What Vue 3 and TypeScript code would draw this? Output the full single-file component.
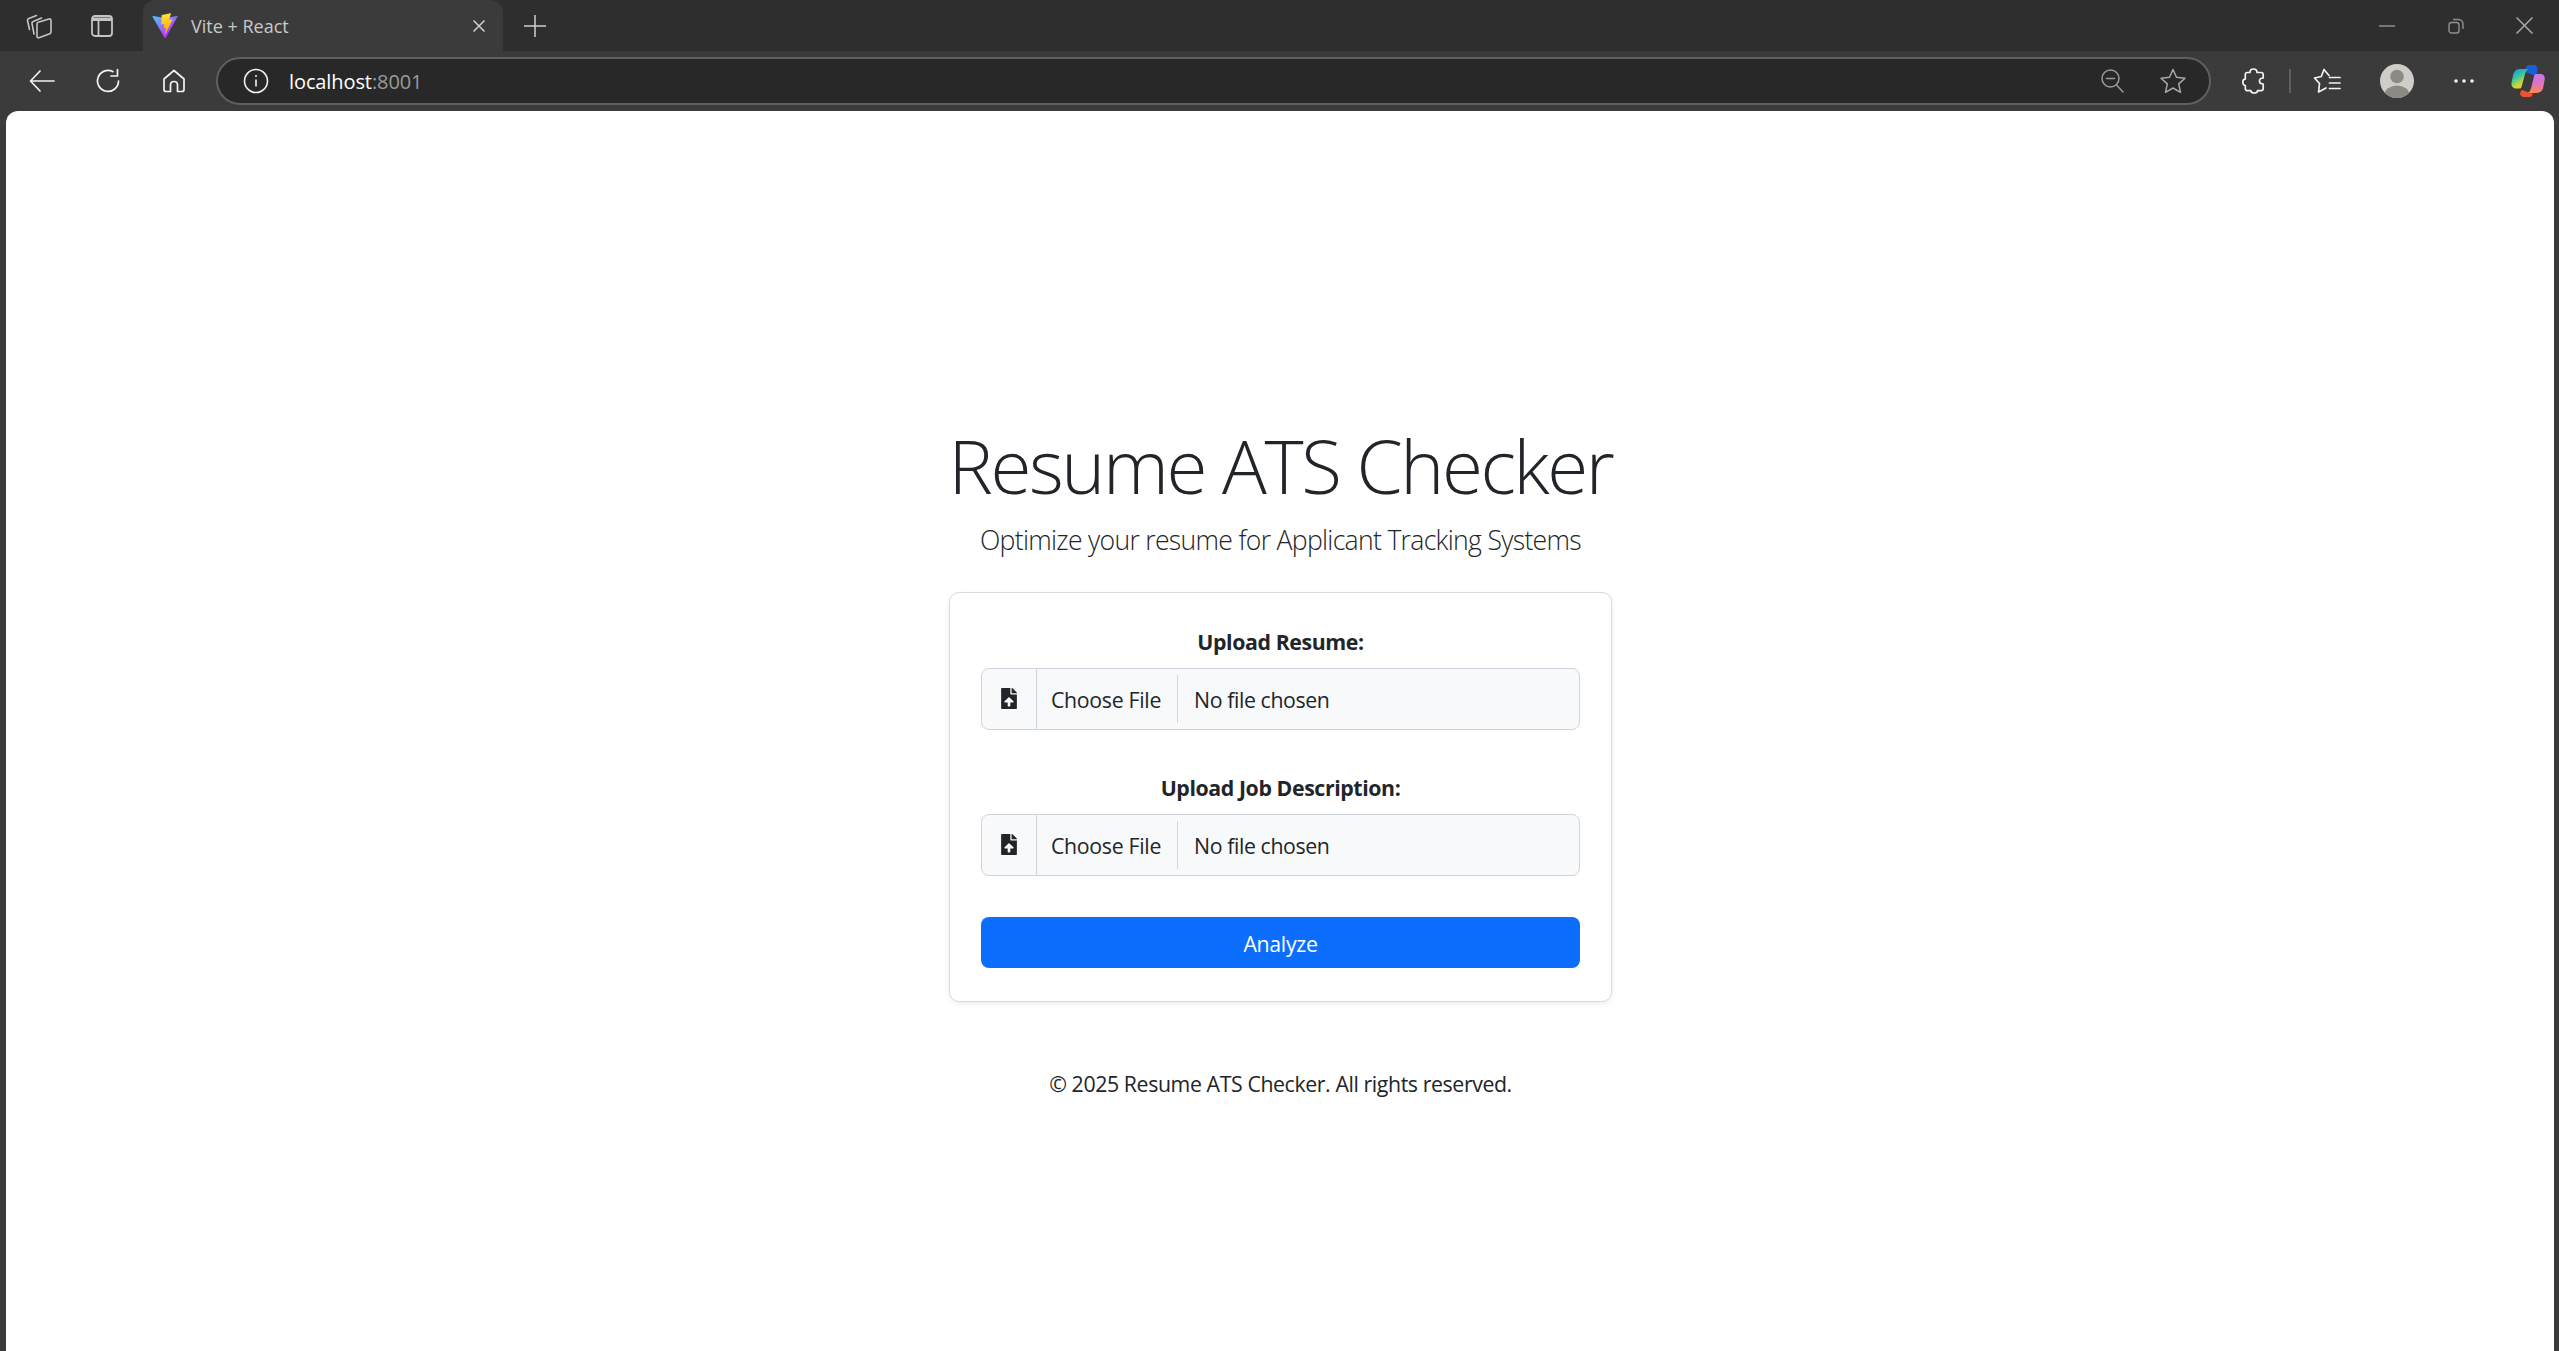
<script setup lang="ts">
const uploads = [
  { id: "resume", label: "Upload Resume:" },
  { id: "job", label: "Upload Job Description:" },
];
</script>

<template>
  <div class="browser">
    <div class="tabstrip">
      <button class="strip-btn first" aria-label="Workspaces">
        <svg width="26" height="26" viewBox="0 0 26 26" fill="none" stroke="#c4c4c4" stroke-width="1.600" stroke-linejoin="round" stroke-linecap="round">
          <path d="M3.500 16.500 1.500 7.500c-.2-1 .3-1.800 1.200-2.100L10.500 2.500" />
          <path d="M8 21 6 10.500c-.2-1 .3-1.800 1.200-2.100L15.500 5" />
          <path d="M11 11c0-.8.4-1.400 1.200-1.700L23 6c1-.3 2 .3 2 1.500V19c0 .8-.4 1.400-1.200 1.700L13 24.700c-1 .3-2-.3-2-1.500Z" />
        </svg>
      </button>
      <button class="strip-btn second" aria-label="Vertical tabs">
        <svg width="24" height="24" viewBox="0 0 24 24" fill="none" stroke="#c4c4c4" stroke-width="1.800">
          <rect x="2" y="2" width="20" height="20" rx="3" />
          <path d="M2 3.500h20V7H2Z" fill="#c4c4c4" stroke="none" />
          <path d="M8.500 7v15" />
        </svg>
      </button>
      <div class="tab">
        <svg class="vite" width="26" height="26" viewBox="0 0 410 404" fill="none">
          <defs>
            <linearGradient id="vitea" x1="6" y1="33" x2="235" y2="344" gradientUnits="userSpaceOnUse">
              <stop stop-color="#41D1FF" />
              <stop offset="1" stop-color="#BD34FE" />
            </linearGradient>
            <linearGradient id="viteb" x1="194" y1="8.800" x2="236" y2="292" gradientUnits="userSpaceOnUse">
              <stop stop-color="#FFEA83" />
              <stop offset="0.083" stop-color="#FFDD35" />
              <stop offset="1" stop-color="#FFA800" />
            </linearGradient>
          </defs>
          <path d="M399.641 59.5246L215.643 388.545C211.844 395.338 202.084 395.378 198.228 388.618L10.5817 59.5563C6.38087 52.1896 12.6802 43.2665 21.0281 44.7586L205.223 77.6824C206.398 77.8924 207.601 77.8904 208.776 77.6763L389.119 44.8058C397.439 43.2894 403.768 52.1434 399.641 59.5246Z" fill="url(#vitea)" />
          <path d="M292.965 1.5744L156.801 28.2552C154.563 28.6937 152.906 30.5903 152.771 32.8664L144.395 174.33C144.198 177.662 147.258 180.248 150.51 179.498L188.42 170.749C191.967 169.931 195.172 173.055 194.443 176.622L183.18 231.775C182.422 235.487 185.907 238.661 189.532 237.56L212.947 230.446C216.577 229.344 220.065 232.527 219.297 236.242L201.398 322.875C200.278 328.294 207.486 331.249 210.492 326.603L212.5 323.5L323.454 102.072C325.312 98.3645 322.108 94.137 318.036 94.9228L279.014 102.454C275.347 103.161 272.227 99.746 273.262 96.1583L298.731 7.86689C299.767 4.27314 296.636 0.855181 292.965 1.5744Z" fill="url(#viteb)" />
        </svg>
        <span class="tab-title">Vite + React</span>
        <svg class="tab-close" width="14" height="14" viewBox="0 0 14 14" stroke="#d0d0d0" stroke-width="1.500">
          <path d="M1.500 1.500 12.500 12.500M12.500 1.500 1.500 12.500" />
        </svg>
      </div>
      <button class="strip-btn plus" aria-label="New tab">
        <svg width="22" height="22" viewBox="0 0 22 22" stroke="#d0d0d0" stroke-width="1.500">
          <path d="M11 0v22M0 11h22" />
        </svg>
      </button>
      <div class="window-controls">
        <button class="win-btn" aria-label="Minimize">
          <svg width="16" height="16" viewBox="0 0 16 16" stroke="#8f8f8f" stroke-width="1.500"><path d="M0 8h16" /></svg>
        </button>
        <button class="win-btn" aria-label="Restore">
          <svg width="16" height="16" viewBox="0 0 16 16" fill="none" stroke="#8f8f8f" stroke-width="1.400">
            <rect x="1" y="4.500" width="10" height="10.500" rx="2.500" />
            <path d="M5 1.500h5.500c2.500 0 4.500 2 4.500 4.500v5" />
          </svg>
        </button>
        <button class="win-btn" aria-label="Close">
          <svg width="17" height="17" viewBox="0 0 17 17" stroke="#a8a8a8" stroke-width="1.500"><path d="M.5.500l16 16M16.500.500l-16 16" /></svg>
        </button>
      </div>
    </div>

    <div class="toolbar">
      <button class="tool-btn" aria-label="Back">
        <svg width="26" height="24" viewBox="0 0 26 24" fill="none" stroke="#f2f2f2" stroke-width="1.700" stroke-linecap="round" stroke-linejoin="round">
          <path d="M25 12H2M11 2 1.500 12 11 22" />
        </svg>
      </button>
      <button class="tool-btn" aria-label="Refresh">
        <svg width="26" height="26" viewBox="0 0 26 26" fill="none" stroke="#f2f2f2" stroke-width="1.700" stroke-linecap="round" stroke-linejoin="round">
          <path d="M23.500 13A10.500 10.500 0 1 1 18 3.700" />
          <path d="M22.500 1.500V8H16" />
        </svg>
      </button>
      <button class="tool-btn" aria-label="Home">
        <svg width="24" height="24" viewBox="0 0 24 24" fill="none" stroke="#f2f2f2" stroke-width="1.700" stroke-linejoin="round">
          <path d="M12 1.500 2 10v10.500c0 1.100.9 2 2 2h4.500V16c0-2 1.500-3.500 3.500-3.500s3.500 1.500 3.500 3.500v6.500H20c1.100 0 2-.9 2-2V10Z" />
        </svg>
      </button>

      <div class="address">
        <svg class="info" width="26" height="26" viewBox="0 0 26 26" fill="none" stroke="#f2f2f2" stroke-width="1.600">
          <circle cx="13" cy="13" r="11.500" />
          <path d="M13 11.500v7" />
          <circle cx="13" cy="8" r="1" fill="#f2f2f2" stroke="none" />
        </svg>
        <span class="url"><span class="host">localhost</span><span class="port">:8001</span></span>
        <svg class="zoom-out" width="23" height="24" viewBox="0 0 23 24" fill="none" stroke="#9a9a9a" stroke-width="1.500" stroke-linecap="round">
          <circle cx="9.500" cy="9.500" r="8.500" />
          <path d="M5.500 9.500h8M15.500 16l6.500 7" />
        </svg>
        <svg class="star" width="26" height="26" viewBox="0 0 26 26" fill="none" stroke="#a8a8a8" stroke-width="1.500" stroke-linejoin="round">
          <path d="m13 1.500 3.500 7.800 8.500.9-6.300 5.700 1.800 8.400L13 20l-7.500 4.300 1.800-8.400L1 10.200l8.500-.9Z" />
        </svg>
      </div>

      <button class="tool-btn ext" aria-label="Extensions">
        <svg width="23" height="26" viewBox="0 0 23 26" fill="none" stroke="#f2f2f2" stroke-width="1.700" stroke-linejoin="round">
          <path d="M8 4.500C8 2.500 9.500 1 11.500 1S15 2.500 15 4.500h4c1.200 0 2.200 1 2.200 2.200v3.300c-2.200 0-3.700 1.200-3.700 3s1.500 3 3.700 3v4.500c0 1.200-1 2.200-2.200 2.200h-3.500c0 1.300-1.500 2.300-3.300 2.300s-3.300-1-3.300-2.300H5.500c-1.200 0-2.200-1-2.200-2.200v-3c-1.500 0-2.500-1.500-2.500-3.200s1-3.200 2.500-3.200V6.700c0-1.200 1-2.200 2.200-2.200Z" />
        </svg>
      </button>
      <span class="tool-divider"></span>
      <button class="tool-btn fav" aria-label="Favorites">
        <svg width="28" height="26" viewBox="0 0 28 26" fill="none" stroke="#f2f2f2" stroke-width="1.700" stroke-linejoin="round" stroke-linecap="round">
          <path d="M16 7.500 11 1.500 8.300 8.500 1.500 10l5 5.500-.9 8.500 7.400-4" />
          <path d="M16.500 9.500H27M16.500 15H27M16.500 20.500H27" />
        </svg>
      </button>
      <button class="tool-btn profile" aria-label="Profile">
        <svg width="34" height="34" viewBox="0 0 34 34">
          <defs><clipPath id="avatar"><circle cx="17" cy="17" r="17" /></clipPath></defs>
          <circle cx="17" cy="17" r="17" fill="#cfcdc8" />
          <g clip-path="url(#avatar)" fill="#8d8a86">
            <circle cx="17" cy="12.500" r="6.800" />
            <ellipse cx="17" cy="31" rx="12.500" ry="9.500" />
          </g>
        </svg>
      </button>
      <button class="tool-btn" aria-label="More">
        <svg width="20" height="4" viewBox="0 0 20 4" fill="#f2f2f2">
          <circle cx="2" cy="2" r="1.800" /><circle cx="10" cy="2" r="1.800" /><circle cx="18" cy="2" r="1.800" />
        </svg>
      </button>
      <button class="tool-btn copilot" aria-label="Copilot">
        <svg width="34" height="34" viewBox="0 0 34 34" fill="none">
          <defs>
            <linearGradient id="cpa" x1="0" y1="0" x2="0.500" y2="1">
              <stop offset="0" stop-color="#1f8fe8" />
              <stop offset="0.450" stop-color="#35c4a0" />
              <stop offset="0.800" stop-color="#c6d83a" />
              <stop offset="1" stop-color="#f7c52c" />
            </linearGradient>
            <linearGradient id="cpb" x1="0.500" y1="0" x2="0.500" y2="1">
              <stop offset="0" stop-color="#c77be8" />
              <stop offset="0.500" stop-color="#e070c8" />
              <stop offset="1" stop-color="#ff8a4a" />
            </linearGradient>
          </defs>
          <path d="M18 1h5c3 0 4 3 3.500 5L25 12 14 8l1-4c.4-2 1.500-3 3-3Z" fill="#1a5fd8" />
          <path d="M11 26l11 4c-.5 1.500-1.500 3-3.500 3H13c-3 0-4.500-2.500-3.500-5Z" fill="#f0522f" />
          <path d="M9 5h8c-1.500 1-2.300 3-3 5l-3.500 13c-.3 1-1 1.500-2 1.500H5c-3 0-5-2.500-4.500-6l1.500-7C3 7 5.500 5 9 5Z" fill="url(#cpa)" />
          <path d="M25 10h4.500c3 0 4.700 2.500 4.200 5.500l-1.500 8c-.7 3.500-3.500 5.500-7 5.500H17c1.800-1 2.500-3 3.200-5.200l2.800-11.300c.3-1.500 1-2.500 2-2.500Z" fill="url(#cpb)" />
        </svg>
      </button>
    </div>

    <main class="page">
      <h1 class="title">Resume ATS Checker</h1>
      <p class="lead">Optimize your resume for Applicant Tracking Systems</p>

      <form class="card" @submit.prevent>
        <div v-for="item in uploads" :key="item.id" class="field">
          <label class="field-label" :for="item.id">{{ item.label }}</label>
          <div class="input-group">
            <span class="input-icon">
              <svg width="16" height="21" viewBox="0 0 384 512" fill="#212529">
                <path d="M224 136V0H24C10.700 0 0 10.700 0 24v464c0 13.300 10.700 24 24 24h336c13.300 0 24-10.700 24-24V160H248c-13.200 0-24-10.800-24-24zm65.180 216.010H224v80c0 8.840-7.160 16-16 16h-32c-8.840 0-16-7.160-16-16v-80H94.820c-14.280 0-21.410-17.290-11.270-27.360l96.420-95.700c6.650-6.610 17.390-6.610 24.040 0l96.420 95.700c10.150 10.070 3.030 27.360-11.250 27.360zM377 105L279.100 7c-4.500-4.500-10.600-7-17-7H256v128h128v-6.100c0-6.300-2.500-12.400-7-16.900z" />
              </svg>
            </span>
            <button :id="item.id" type="button" class="file-btn">Choose File</button>
            <span class="file-name">No file chosen</span>
          </div>
        </div>
        <button type="submit" class="analyze">Analyze</button>
      </form>

      <p class="copyright">© 2025 Resume ATS Checker. All rights reserved.</p>
    </main>
  </div>
</template>

<style scoped>
.browser {
  height: 1351px;
  display: flex;
  flex-direction: column;
  background: #3b3b3b;
  font-family: "Open Sans", "Noto Sans", sans-serif;
  overflow: hidden;
}
button {
  border: none;
  background: none;
  padding: 0;
  font: inherit;
  cursor: pointer;
}

.tabstrip {
  height: 51px;
  flex-shrink: 0;
  display: flex;
  align-items: stretch;
  background: #2e2e2e;
}
.strip-btn {
  display: flex;
  align-items: center;
  justify-content: center;
}
.first {
  width: 78px;
}
.second {
  width: 48px;
}
.tab {
  width: 360px;
  margin-left: 17px;
  display: flex;
  align-items: center;
  padding: 0 17px 0 9px;
  box-sizing: border-box;
  background: #3b3b3b;
  border-radius: 12px 12px 0 0;
}
.vite {
  flex-shrink: 0;
}
.tab-title {
  flex: 1;
  margin-left: 13px;
  font-size: 18px;
  color: #c9c9c9;
  letter-spacing: 0;
}
.plus {
  width: 64px;
}
.window-controls {
  margin-left: auto;
  display: flex;
}
.win-btn {
  width: 69px;
  display: flex;
  align-items: center;
  justify-content: center;
}

.toolbar {
  height: 60px;
  flex-shrink: 0;
  display: flex;
  align-items: center;
  padding-left: 9px;
}
.tool-btn {
  width: 66px;
  height: 48px;
  flex-shrink: 0;
  display: flex;
  align-items: center;
  justify-content: center;
}
.address {
  flex: 1;
  height: 48px;
  margin: 0 9px;
  box-sizing: border-box;
  display: flex;
  align-items: center;
  padding: 0 23px 0 25px;
  background: #282828;
  border: 2px solid #5f5f5f;
  border-radius: 24px;
}
.url {
  margin-left: 20px;
  flex: 1;
  font-size: 20px;
  letter-spacing: -0.1px;
}
.host {
  color: #ffffff;
}
.port {
  color: #9a9a9a;
}
.zoom-out {
  margin-right: 36px;
}
.ext {
  margin-right: 3px;
}
.tool-divider {
  width: 2px;
  height: 24px;
  flex-shrink: 0;
  margin-right: 3px;
  background: #5f5f5f;
}
.fav {
  margin-right: 4px;
}
.profile {
  margin-right: 1px;
}
.copilot {
  width: 62px;
}

.page {
  flex: 1;
  margin: 0 5px 0 6px;
  padding: 309px 0 0 1px;
  display: flex;
  flex-direction: column;
  align-items: center;
  background: #ffffff;
  border-radius: 12px 12px 0 0;
  color: #212529;
}
.title {
  margin: 0 0 10px;
  font-size: 74.6px;
  font-weight: 300;
  line-height: 90px;
  letter-spacing: -2.4px;
}
.lead {
  margin: 0 0 32px;
  font-size: 26.600px;
  font-weight: 300;
  line-height: 40px;
  letter-spacing: -0.7px;
}
.card {
  width: 663px;
  box-sizing: border-box;
  padding: 32px 31px 33px;
  display: flex;
  flex-direction: column;
  background: #ffffff;
  border: 1px solid #d9dadb;
  border-radius: 10px;
  box-shadow: 0 2px 5px rgba(0, 0, 0, 0.075);
}
.field {
  display: flex;
  flex-direction: column;
  margin-bottom: 41px;
}
.field-label {
  margin-bottom: 10px;
  padding-top: 1px;
  text-align: center;
  font-size: 21.300px;
  font-weight: 700;
  line-height: 32px;
  letter-spacing: -0.4px;
}
.input-group {
  height: 62px;
  box-sizing: border-box;
  display: flex;
  align-items: center;
  background: #f8f9fa;
  border: 1.500px solid #ced4da;
  border-radius: 8px;
}
.input-icon {
  width: 55px;
  align-self: stretch;
  flex-shrink: 0;
  display: flex;
  align-items: center;
  justify-content: center;
  padding-bottom: 2px;
  box-sizing: border-box;
  border-right: 1.500px solid #ced4da;
}
.file-btn {
  width: 141px;
  height: 48px;
  flex-shrink: 0;
  box-sizing: border-box;
  padding-right: 2px;
  border-right: 1.500px solid #d4d6d8;
  font-size: 21.300px;
  letter-spacing: -0.3px;
  color: #212529;
}
.file-name {
  margin-left: 16px;
  font-size: 21.300px;
  letter-spacing: -0.4px;
}
.analyze {
  height: 51px;
  padding-top: 1px;
  background: #0d6efd;
  border-radius: 8px;
  color: #ffffff;
  font-size: 21.300px;
  letter-spacing: -0.3px;
}
.copyright {
  margin: 66px 0 0;
  font-size: 21.300px;
  line-height: 32px;
  letter-spacing: -0.4px;
}
</style>
